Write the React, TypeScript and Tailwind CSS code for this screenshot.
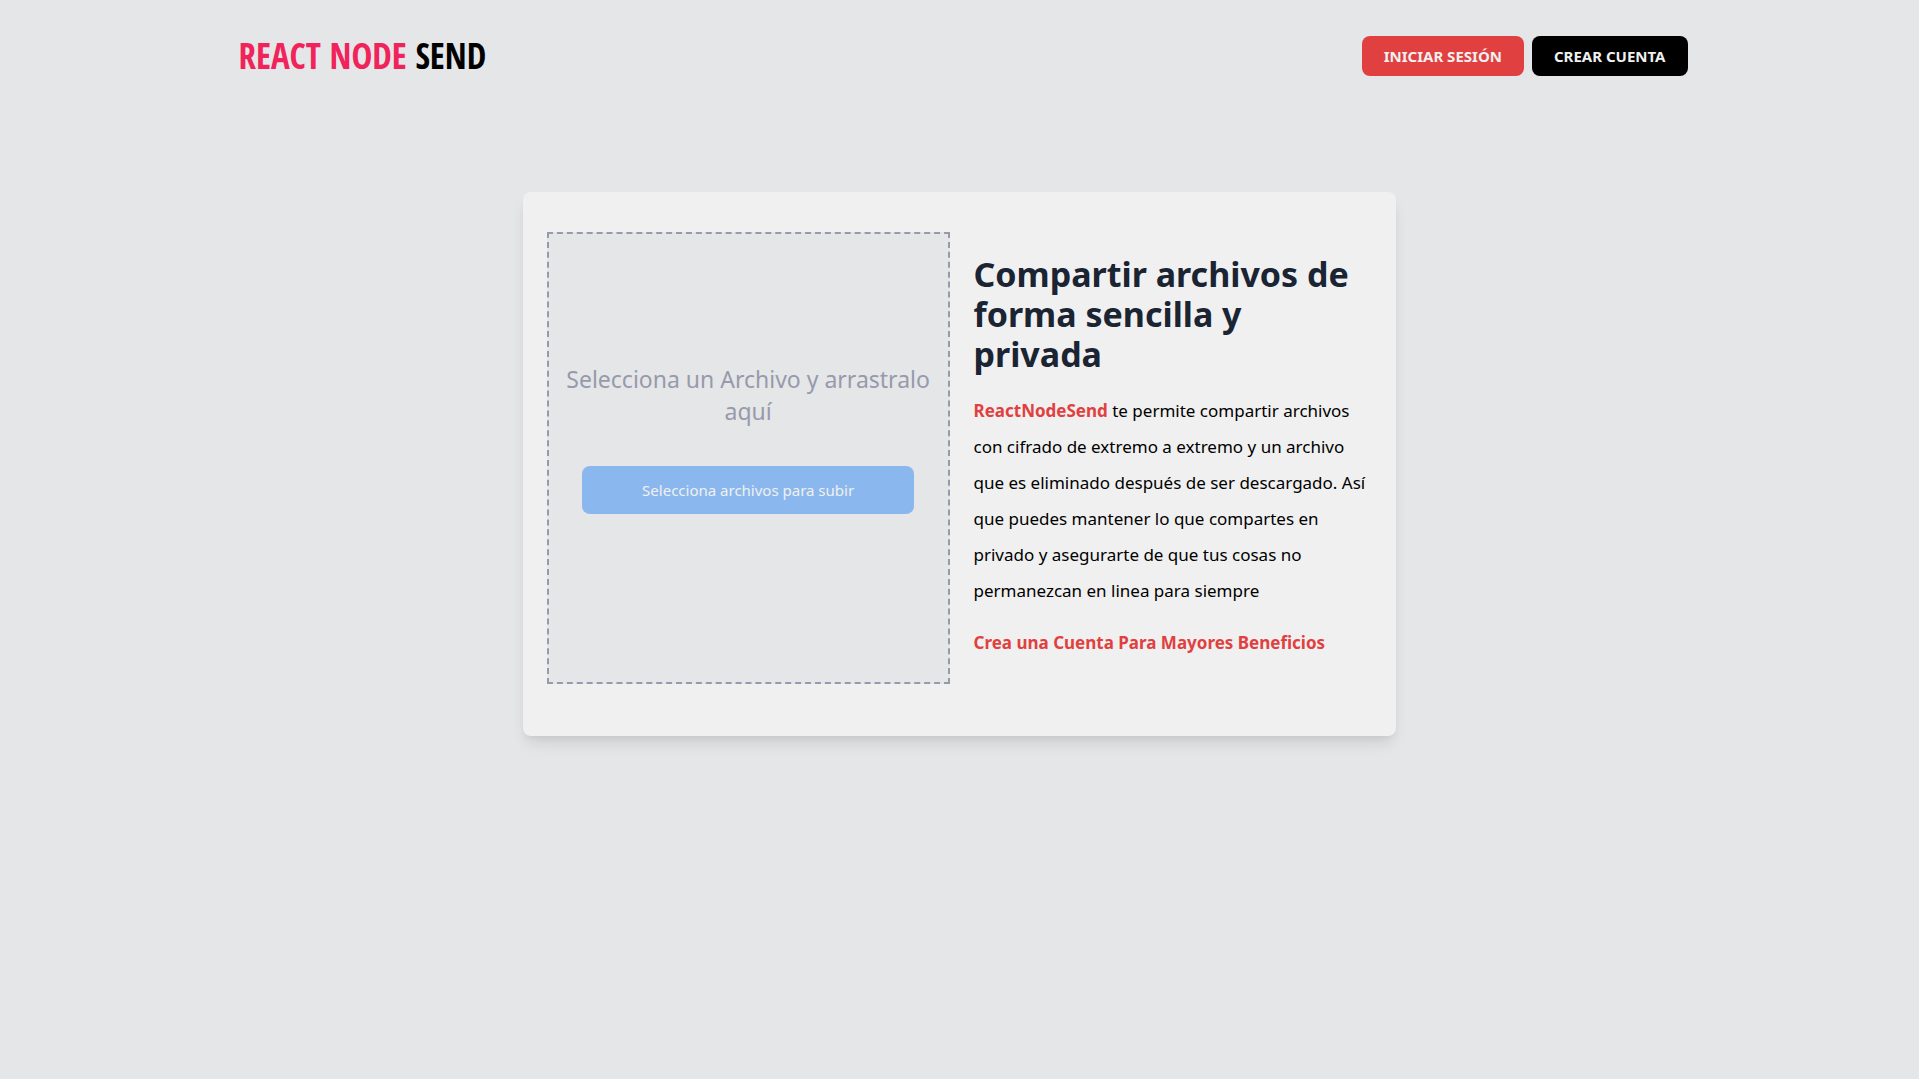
export default function App() {
  return (
    <div className="min-h-screen bg-[#e4e6e8] font-['Noto_Sans','Open_Sans',sans-serif] text-black">
      <div className="mx-auto w-full max-w-[1456px] px-4 pt-9 xl:px-0">
        <header className="flex flex-col items-center justify-between gap-4 md:flex-row">
          <a
            href="#inicio"
            className="px-[7px] font-['Noto_Sans_ExtraCondensed','Open_Sans_Condensed','Liberation_Sans_Narrow','Roboto_Condensed',sans-serif] text-[35px] leading-9 font-bold whitespace-nowrap uppercase"
          >
            <span className="text-[#f0245b]">React Node</span> Send
          </a>
          <nav className="flex gap-2 text-[15px] leading-6 font-bold whitespace-nowrap text-[#f0f0f0] uppercase">
            <a href="#login" className="rounded-lg bg-[#e04040] px-[22px] py-2">
              Iniciar Sesión
            </a>
            <a href="#crear-cuenta" className="rounded-lg bg-black px-[22px] py-2">
              Crear Cuenta
            </a>
          </nav>
        </header>

        <main className="mx-auto mt-29 flex w-full flex-col gap-6 rounded-lg bg-[#f0f0f0] px-6 pt-10 pb-13 shadow-[0_10px_15px_-3px_rgba(0,0,0,0.1),0_4px_6px_-2px_rgba(0,0,0,0.05)] lg:w-3/5 lg:flex-row">
          <section className="flex min-h-[452px] flex-1 flex-col items-center border-2 border-dashed border-[#979aab] bg-[#e4e6e8] pt-[129px]">
            <p className="text-center text-[23px] leading-8 text-[#979aab]">
              Selecciona un Archivo y arrastralo aquí
            </p>
            <button
              type="button"
              className="mt-[39px] w-5/6 rounded-lg bg-[#8ab8ee] py-3 text-[15px] leading-6 text-[#f0f0f0]"
            >
              Selecciona archivos para subir
            </button>
          </section>

          <section className="flex-1 pt-[22px]">
            <h1 className="text-[34px] leading-10 font-bold text-[#1a2433]">
              Compartir archivos de forma sencilla y privada
            </h1>
            <p className="mt-[19px] text-[17px] leading-9">
              <span className="font-bold text-[#e04040]">ReactNodeSend</span> te
              permite compartir archivos con cifrado de extremo a extremo y un
              archivo que es eliminado después de ser descargado. Así que puedes
              mantener lo que compartes en privado y asegurarte de que tus cosas
              no permanezcan en linea para siempre
            </p>
            <a
              href="#crear-cuenta"
              className="mt-5 block text-[17px] leading-7 font-bold text-[#e04040]"
            >
              Crea una Cuenta Para Mayores Beneficios
            </a>
          </section>
        </main>
      </div>
    </div>
  );
}
